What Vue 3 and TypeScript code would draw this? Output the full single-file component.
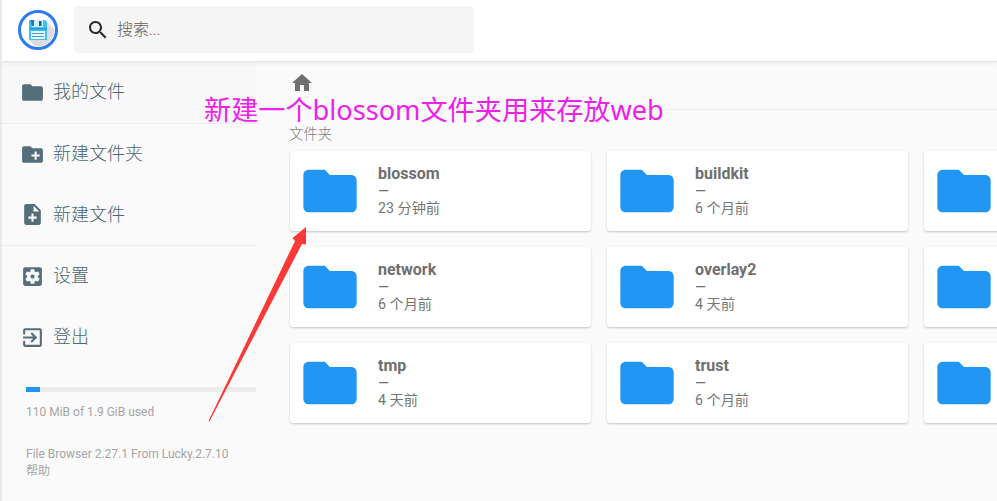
<script setup lang="ts">
interface NavItem {
  label: string
  path: string
}

interface Folder {
  name: string
  modified: string
}

const folderPath = 'M10 4H4c-1.1 0-1.99.9-1.99 2L2 18c0 1.1.9 2 2 2h16c1.1 0 2-.9 2-2V8c0-1.1-.9-2-2-2h-8l-2-2z'

const navGroups: NavItem[][] = [
  [{ label: '我的文件', path: folderPath }],
  [
    {
      label: '新建文件夹',
      path: 'M20 6h-8l-2-2H4c-1.11 0-1.99.89-1.99 2L2 18c0 1.11.89 2 2 2h16c1.11 0 2-.89 2-2V8c0-1.11-.89-2-2-2zm-1 8h-3v3h-2v-3h-3v-2h3V9h2v3h3v2z',
    },
    {
      label: '新建文件',
      path: 'M14 2H6c-1.1 0-1.99.9-1.99 2L4 20c0 1.1.89 2 1.99 2H18c1.1 0 2-.9 2-2V8l-6-6zm2 14h-3v3h-2v-3H8v-2h3v-3h2v3h3v2zm-3-7V3.500L18.500 9H13z',
    },
  ],
  [
    {
      label: '设置',
      path: 'M12 10c-1.100 0-2 .9-2 2s.9 2 2 2 2-.9 2-2-.9-2-2-2zm7-7H5c-1.110 0-2 .9-2 2v14c0 1.100.89 2 2 2h14c1.110 0 2-.9 2-2V5c0-1.100-.89-2-2-2zm-1.750 9c0 .23-.02.46-.05.680l1.480 1.160c.13.110.17.300.08.450l-1.400 2.420c-.09.150-.27.210-.43.150l-1.740-.7c-.36.280-.76.510-1.180.690l-.26 1.850c-.03.170-.18.300-.35.300h-2.800c-.17 0-.32-.13-.35-.29l-.26-1.850c-.43-.18-.82-.41-1.180-.69l-1.740.7c-.16.060-.34 0-.43-.15l-1.400-2.420c-.09-.15-.05-.34.080-.45l1.480-1.160c-.03-.23-.05-.46-.05-.69s.02-.46.05-.68l-1.480-1.160c-.13-.11-.17-.3-.08-.45l1.400-2.420c.09-.15.270-.21.430-.15l1.740.7c.36-.28.760-.51 1.180-.69l.26-1.850c.03-.17.180-.3.350-.3h2.800c.17 0 .32.130.350.290l.26 1.850c.43.180.820.410 1.180.690l1.740-.7c.16-.06.340 0 .43.150l1.400 2.420c.09.150.050.340-.08.450l-1.480 1.160c.03.230.050.460.050.690z',
    },
    {
      label: '登出',
      path: 'M10.090 15.590L11.500 17l5-5-5-5-1.410 1.410L12.670 11H3v2h9.670l-2.580 2.590zM19 3H5c-1.110 0-2 .9-2 2v4h2V5h14v14H5v-4H3v4c0 1.100.89 2 2 2h14c1.100 0 2-.9 2-2V5c0-1.100-.9-2-2-2z',
    },
  ],
]

const folders: Folder[] = [
  { name: 'blossom', modified: '23 分钟前' },
  { name: 'buildkit', modified: '6 个月前' },
  { name: '', modified: '' },
  { name: 'network', modified: '6 个月前' },
  { name: 'overlay2', modified: '4 天前' },
  { name: '', modified: '' },
  { name: 'tmp', modified: '4 天前' },
  { name: 'trust', modified: '6 个月前' },
  { name: '', modified: '' },
]

const usedPercent = 6
</script>

<template>
  <div class="app">
    <header class="topbar">
      <svg class="logo" viewBox="0 0 40 40">
        <circle cx="20" cy="20" r="18.500" fill="#fff" stroke="#2d7bf0" stroke-width="3" />
        <path d="M29 12L36 19A16 16 0 0 1 17 36L11 30Z" fill="#dcdcdc" />
        <path d="M12 10h15l2 2v18H12l-1-1V11z" fill="#3fc0f5" />
        <path d="M14 10h11v7H14z" fill="#d5f2fc" />
        <path d="M12.500 10h3.500v6h-2z" fill="#1e7fae" />
        <path d="M21 11h2.500v5H21z" fill="#19638b" />
        <path d="M11 18h18v1.500H11z" fill="#239fd6" />
        <path d="M13 21h14v8H13z" fill="#e6f7fe" />
        <path d="M14 23h12v1H14zM14 26h12v1H14z" fill="#4a9fc4" />
      </svg>
      <div class="search">
        <svg class="search-icon" viewBox="0 0 24 24">
          <path d="M15.500 14h-.79l-.28-.27C15.410 12.590 16 11.110 16 9.500 16 5.910 13.090 3 9.500 3S3 5.910 3 9.500 5.910 16 9.500 16c1.610 0 3.090-.59 4.230-1.570l.27.280v.79l5 4.990L20.490 19l-4.990-5zm-6 0C7.010 14 5 11.990 5 9.500S7.010 5 9.500 5 14 7.010 14 9.500 11.990 14 9.500 14z" />
        </svg>
        <span>搜索...</span>
      </div>
    </header>

    <div class="body">
      <aside class="sidebar">
        <nav v-for="(group, g) in navGroups" :key="g" class="nav-group">
          <a v-for="item in group" :key="item.label" class="nav-item">
            <svg class="nav-icon" viewBox="0 0 24 24"><path :d="item.path" /></svg>
            <span>{{ item.label }}</span>
          </a>
        </nav>
        <div class="usage">
          <div class="track"><div class="fill" :style="{ width: usedPercent + '%' }"></div></div>
          <p>110 MiB of 1.9 GiB used</p>
        </div>
        <div class="credits">
          <p>File Browser 2.27.1 From Lucky.2.7.10</p>
          <p>帮助</p>
        </div>
      </aside>

      <main class="content">
        <div class="breadcrumbs">
          <svg class="home" viewBox="0 0 24 24"><path d="M10 20v-6h4v6h5v-8h3L12 3 2 12h3v8z" /></svg>
        </div>
        <h2>文件夹</h2>
        <div class="grid">
          <article v-for="(folder, i) in folders" :key="i" class="card">
            <svg class="folder" viewBox="0 0 24 24"><path :d="folderPath" /></svg>
            <div v-if="folder.name" class="meta">
              <p class="name">{{ folder.name }}</p>
              <p class="size">—</p>
              <p class="date">{{ folder.modified }}</p>
            </div>
          </article>
        </div>
      </main>
    </div>

    <div class="note">新建一个blossom文件夹用来存放web</div>
    <svg class="arrow" viewBox="0 0 100 196">
      <path d="M0.500 194L87 14L84.500 11L98 0V17.500L94 17L1.500 194.500Z" fill="#fb3a37" />
    </svg>
  </div>
</template>

<style>
body {
  overflow: hidden;
}
</style>

<style scoped>
.app {
  position: relative;
  box-sizing: border-box;
  width: 997px;
  height: 501px;
  overflow: hidden;
  display: flex;
  flex-direction: column;
  background: #fafafa;
  border-left: 2px solid #e9e9e9;
  font-family: Roboto, 'Noto Sans CJK SC', sans-serif;
  color: #6f6f6f;
}
p,
h2 {
  margin: 0;
}
svg {
  flex: none;
  display: block;
}
.topbar {
  position: relative;
  flex: none;
  box-sizing: border-box;
  height: 62px;
  display: flex;
  align-items: flex-start;
  gap: 16px;
  padding: 6px 16px 0;
  background: #fff;
  border-bottom: 1px solid #e4e4e4;
  box-shadow: 0 0 5px rgba(0, 0, 0, 0.1);
}
.logo {
  width: 40px;
  height: 40px;
  margin-top: 4px;
}
.search {
  box-sizing: border-box;
  width: 400px;
  height: 47px;
  display: flex;
  align-items: center;
  gap: 7px;
  padding-left: 12px;
  background: #f5f5f5;
  border-radius: 4px;
  font-size: 16px;
  font-weight: 300;
  color: #5f5f5f;
}
.search-icon {
  width: 24px;
  height: 24px;
  fill: #2b2b2b;
}
.search span {
  padding-bottom: 4px;
}
.body {
  flex: 1;
  display: flex;
  align-items: flex-start;
}
.sidebar {
  flex: none;
  width: 254px;
}
.nav-group {
  display: flex;
  flex-direction: column;
}
.nav-group + .nav-group {
  border-top: 1px solid #ececec;
}
.nav-group:first-child {
  background: #f8f8f8;
}
.nav-item {
  height: 60.700px;
  display: flex;
  align-items: center;
  gap: 8px;
  padding-left: 18px;
  font-size: 18px;
  font-weight: 300;
  color: #4b6672;
}
.nav-item span {
  padding-bottom: 4px;
}
.nav-icon {
  width: 25px;
  height: 25px;
  fill: #546e7a;
}
.usage,
.credits {
  margin-left: 24px;
  font-size: 12px;
  line-height: 17px;
  color: #a5a5a5;
}
.usage {
  margin-top: 20px;
}
.track {
  height: 5px;
  margin-bottom: 12px;
  background: #ececec;
}
.fill {
  height: 5px;
  background: #2196f3;
}
.credits {
  margin-top: 25px;
}
.content {
  flex: 1;
  min-width: 0;
  padding-left: 32px;
}
.breadcrumbs {
  box-sizing: border-box;
  height: 48px;
  padding: 9px 0 0 2px;
  border-bottom: 1px solid #ececec;
}
.home {
  width: 24px;
  height: 24px;
  fill: #6f6f6f;
}
h2 {
  height: 41px;
  padding: 15px 0 0 1px;
  box-sizing: border-box;
  font-size: 14.400px;
  line-height: 20px;
  font-weight: 300;
  color: #7c7c7c;
}
.grid {
  display: grid;
  grid-template-columns: repeat(3, 301px);
  gap: 16px;
  padding-left: 2px;
}
.card {
  box-sizing: border-box;
  height: 80px;
  display: flex;
  align-items: center;
  gap: 16px;
  padding-left: 8px;
  background: #fff;
  border-radius: 3px;
  box-shadow: 0 1px 3px rgba(0, 0, 0, 0.06), 0 1px 2px rgba(0, 0, 0, 0.16);
}
.folder {
  width: 64px;
  height: 64px;
  fill: #2196f3;
}
.meta {
  padding-bottom: 2px;
  font-size: 14.200px;
  line-height: 17px;
}
.name {
  font-size: 16px;
  line-height: 19px;
  font-weight: 700;
}
.size {
  width: 11px;
  overflow: hidden;
}
.date {
  color: #757575;
}
.note {
  position: absolute;
  left: 202px;
  top: 97px;
  font-family: 'Noto Sans', 'Noto Sans CJK SC', sans-serif;
  font-size: 27.150px;
  line-height: 26px;
  white-space: nowrap;
  color: #ed22ea;
}
.arrow {
  position: absolute;
  left: 206px;
  top: 227px;
  width: 100px;
  height: 196px;
}
</style>
